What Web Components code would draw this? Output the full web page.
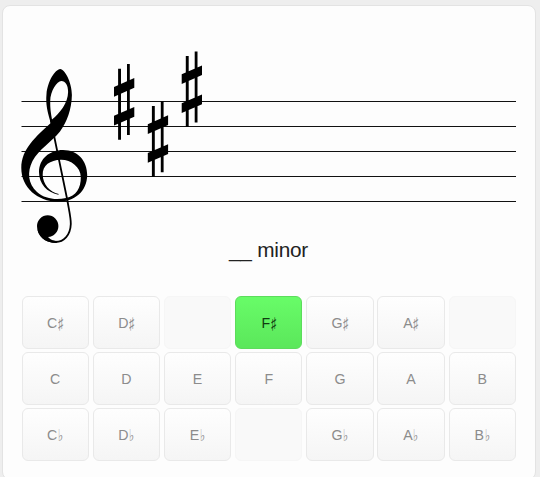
<!DOCTYPE html>
<html lang="en">
<head>
<meta charset="utf-8">
<title>Key signatures</title>
<style>
	body {
		margin: 0;
		height: 477px;
		overflow: hidden;
		background: #eeeeee;
		font-family: "Liberation Sans", Arial, sans-serif;
	}
</style>
</head>
<body>
<quiz-card>
	<key-staff slot="staff"></key-staff>
	<span slot="question">__ minor</span>
	<note-button>C<note-sign>♯</note-sign></note-button>
	<note-button>D<note-sign>♯</note-sign></note-button>
	<note-button empty></note-button>
	<note-button correct>F<note-sign>♯</note-sign></note-button>
	<note-button>G<note-sign>♯</note-sign></note-button>
	<note-button>A<note-sign>♯</note-sign></note-button>
	<note-button empty></note-button>
	<note-button>C</note-button>
	<note-button>D</note-button>
	<note-button>E</note-button>
	<note-button>F</note-button>
	<note-button>G</note-button>
	<note-button>A</note-button>
	<note-button>B</note-button>
	<note-button>C<note-sign>♭</note-sign></note-button>
	<note-button>D<note-sign>♭</note-sign></note-button>
	<note-button>E<note-sign>♭</note-sign></note-button>
	<note-button empty></note-button>
	<note-button>G<note-sign>♭</note-sign></note-button>
	<note-button>A<note-sign>♭</note-sign></note-button>
	<note-button>B<note-sign>♭</note-sign></note-button>
</quiz-card>

<script>
// Helper: attach an open shadow root filled with the given markup.
function render(host, markup) {
	host.attachShadow({ mode: 'open' });
	host.shadowRoot.innerHTML = markup;
}

// The white card: staff on top, the question, then a grid of answers.
class QuizCard extends HTMLElement {
	constructor() {
		super();
		render(this, `
			<style>
				:host {
					display: flex;
					flex-direction: column;
					box-sizing: border-box;
					width: 534px;
					height: 475px;
					margin: 5px 0 0 2px;
					padding: 44px 18.5px 0;
					border: 1px solid #e3e3e3;
					border-radius: 8px;
					background: #fdfdfd;
				}
				.question {
					height: 46px;
					line-height: 24px;
					text-align: center;
					font-size: 20.8px;
					letter-spacing: -0.25px;
					text-indent: -1px;
					color: #222;
				}
				.answers {
					display: grid;
					grid-template-columns: repeat(7, 67.3px);
					grid-auto-rows: 53px;
					gap: 3px 3.9px;
					margin-top: 12px;
				}
			</style>
			<slot name="staff"></slot>
			<div class="question"><slot name="question"></slot></div>
			<div class="answers"><slot></slot></div>
		`);
	}
}
customElements.define('quiz-card', QuizCard);

// Five lines, a treble clef and the sharps of the key signature.
class KeyStaff extends HTMLElement {
	constructor() {
		super();
		let lines = [101.5, 126.5, 151.5, 176.5, 201.5]
			.map(y => `<path d="M21.5 ${y}H516"/>`).join('');
		let sharps = [[0, 0], [33.8, 37.3], [67.7, -12.6]]
			.map(([x, y]) => `<use href="#sharp" x="${x}" y="${y}"/>`).join('');
		render(this, `
			<style>
				:host { display: block; height: 188px; }
				svg { display: block; }
			</style>
			<svg width="494.5" height="194" viewBox="22 50 494.5 194" overflow="visible">
				<defs>
					<path id="sharp" d="M118.1 68.7H121V139.7H118.1ZM127 64H129.8V135H127ZM114 86.9L134.3 78V87.7L114 96.7ZM114 115.8L134.3 107V116.8L114 125.5Z"/>
				</defs>
				<g stroke="#111" stroke-width="1.1">${lines}</g>
				${sharps}
				<!-- Loop, body and inner curl of the clef -->
				<path fill-rule="evenodd" d="M50.8 123
					C47.5 112 45.5 104 46.5 94 C47.8 81 55 69.5 60.2 69
					C65 69.2 72 83 71.9 95 C71.7 109 67 122 60 131.5
					C51 142.5 39 149 32.5 161 C27 172 28 184 37 192
					C45 199 56 200.2 66 198 C76 196 81 188 80.8 177
					C80.5 167 71 159.7 61 159.8 C50 160 42.4 165.5 42.7 175
					C43 184 49.5 192 58.8 194 L58.3 194.8
					C47 192.3 39 184 39 172 C39 158.5 50 150 63 150
					C78 150 87.2 161 87.2 175 C87 192 74 201.7 58 201.7
					C37 201.5 21.3 187 21.3 168 C21.3 149 36 136.5 50.8 123Z
					M52 119.5 C60 113 68 103 68.1 92 C68.1 85 65.5 81 61.3 81
					C57 81 50.3 91 50.2 101 C50.1 108 50.8 113 52 119.5Z"/>
				<path d="M50.8 120L67.3 200C68.6 208 71 218 70.8 224C70.4 235 64 242 55.5 242C48 242 41 238 38.5 230" fill="none" stroke="#000" stroke-width="1.8"/>
				<path d="M37 226A10.7 10.7 0 1 1 58.4 226C58.4 232 54 236.5 48 237C51 240 54 241 57 241V242.7C46 243.5 37 237 37 226Z"/>
			</svg>
		`);
	}
}
customElements.define('key-staff', KeyStaff);

// One answer. "correct" paints it green, "empty" leaves a faint placeholder.
class NoteButton extends HTMLElement {
	constructor() {
		super();
		render(this, `
			<style>
				:host {
					display: flex;
					align-items: center;
					justify-content: center;
					box-sizing: border-box;
					border: 1px solid #e9e9e9;
					border-radius: 6px;
					background: linear-gradient(#fefefe, #f5f5f5);
					color: #8c8c8c;
					font: 14.2px/16px "Liberation Sans", Arial, "DejaVu Sans", sans-serif;
				}
				:host([empty]) {
					border-color: #f6f6f6;
					background: #f9f9f9;
				}
				:host([correct]) {
					border-color: #5cdc5c;
					background: linear-gradient(#68fc68, #5be75b);
					color: #113c11;
				}
			</style>
			<slot></slot>
		`);
	}
}
customElements.define('note-button', NoteButton);

// A sharp or flat sign, drawn taller and narrower than the font has it.
class NoteSign extends HTMLElement {
	constructor() {
		super();
		render(this, `
			<style>
				:host {
					display: block;
					width: 5.5px;
					margin-left: 0.5px;
					transform: scale(0.76, 1.15);
					transform-origin: 0 50%;
				}
			</style>
			<slot></slot>
		`);
	}
}
customElements.define('note-sign', NoteSign);
</script>
</body>
</html>
